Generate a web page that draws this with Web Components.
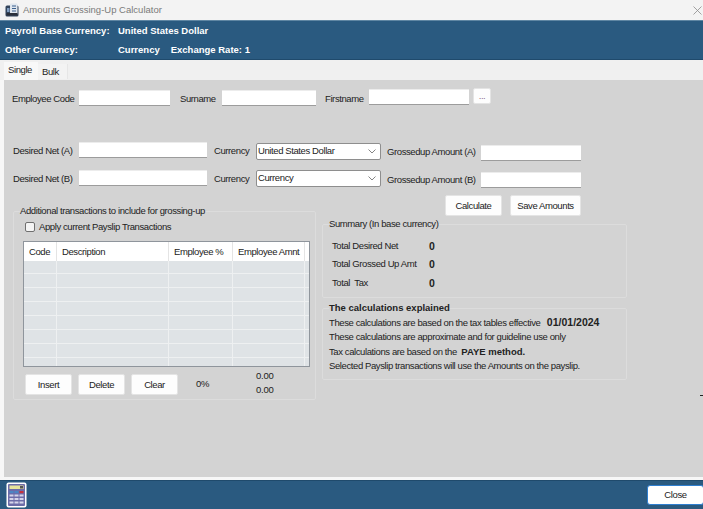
<!DOCTYPE html>
<html>
<head>
<meta charset="utf-8">
<title>Amounts Grossing-Up Calculator</title>
<style>
  html, body { margin: 0; padding: 0; background: #d3d3d3; }
  body { font: 9.5px/12px "Liberation Sans", Arial, sans-serif; letter-spacing: -0.4px; color: #222; }
</style>
</head>
<body>
<amt-calculator></amt-calculator>

<script>
function define(name, html, setup) {
    const template = document.createElement('template');
    template.innerHTML = html;
    customElements.define(name, class extends HTMLElement {
        constructor() {
            super();
            this.attachShadow({ mode: 'open' });
            this.shadowRoot.appendChild(template.content.cloneNode(true));
            if (setup) setup(this.shadowRoot, this);
        }
    });
}

define('amt-titlebar', `
  <style>
    :host { display: flex; align-items: center; height: 20px; padding: 0 5px; box-sizing: border-box; background: #f3f3f3; color: #7a7a7a; font-size: 9.5px; letter-spacing: 0; }
    .icon { width: 14px; height: 14px; margin-right: 4px; flex: none; }
    .title { flex: 1; }
    .x { width: 9px; height: 9px; flex: none; margin-right: -4px; }
  </style>
  <svg class="icon" viewBox="0 0 14 14">
    <rect x="0.5" y="2.5" width="13" height="11" rx="1.5" fill="#33455c"/>
    <rect x="5" y="0.5" width="7.5" height="11" rx="1" fill="#dfe6ee"/>
    <path d="M7 3h4M7 5.5h4M7 8h4" stroke="#3a5f8c" stroke-width="1.2"/>
    <rect x="1.5" y="10" width="11" height="2.5" fill="#2a2f3a"/>
    <rect x="2" y="5" width="2.5" height="4" fill="#7f9cc0"/>
  </svg>
  <span class="title"><slot></slot></span>
  <svg class="x" viewBox="0 0 9 9"><path d="M.5.5l8 8M8.5.5l-8 8" stroke="#8c8c8c" stroke-width=".8" fill="none"/></svg>
`);

define('amt-band', `
  <style>
    :host { display: grid; grid-template-columns: 113px 1fr; grid-template-rows: 19px 19px; align-items: center; align-content: start; height: 40px; box-sizing: border-box; padding: 0 0 0 5px; background: #2a5a80; border-top: 1px solid #5f86a3; border-bottom: 1px solid #1f4a6c; color: #fff; font-weight: bold; letter-spacing: 0; }
  </style>
  <slot></slot>
`);

define('amt-tabs', `
  <style>
    :host { display: flex; align-items: flex-end; height: 20px; padding-left: 4px; box-sizing: border-box; background: #f0f0f0; }
    ::slotted(*) { display: block; }
    ::slotted([active]) { width: 34px; height: 18px; line-height: 16px; background: #f8f8f8; padding-left: 4px; box-sizing: border-box; }
    ::slotted(:not([active])) { width: 30px; height: 15px; margin-bottom: 1px; line-height: 15px; padding-left: 4px; box-sizing: border-box; background: #f3f3f3; border-right: 1px solid #e6e6e6; }
  </style>
  <slot></slot>
`);

define('amt-input', `
  <style>
    :host { display: block; height: 16px; box-sizing: border-box; background: #fff; border-top: 1px solid #ececec; border-bottom: 1px solid #9c9c9c; flex: none; }
  </style>
`);

define('amt-select', `
  <style>
    :host { display: flex; align-items: center; justify-content: space-between; height: 17px; box-sizing: border-box; padding: 0 4px 1px 1px; background: #fff; border: 1px solid #8e8e8e; border-radius: 2px; flex: none; }
    svg { width: 8px; height: 5px; }
  </style>
  <slot></slot>
  <svg viewBox="0 0 8 5"><path d="M.5.5L4 4 7.5.5" fill="none" stroke="#777" stroke-width=".9"/></svg>
`);

define('amt-button', `
  <style>
    :host { display: flex; align-items: center; justify-content: center; height: 21px; box-sizing: border-box; background: #fdfdfd; border: 1px solid #e4e4e4; border-radius: 2px; flex: none; white-space: nowrap; }
  </style>
  <slot></slot>
`);

define('amt-group', `
  <style>
    :host { display: block; box-sizing: border-box; }
    fieldset { margin: 0; padding: 0; height: 100%; box-sizing: border-box; border: 1px solid #dcdcdc; border-radius: 2px; min-width: 0; }
    legend { margin-left: 6px; padding: 0; line-height: 12px; }
    .body { padding-left: var(--pad, 9px); }
  </style>
  <fieldset><legend><slot name="legend"></slot></legend><div class="body"><slot></slot></div></fieldset>
`);

define('amt-checkbox', `
  <style>
    :host { display: flex; align-items: center; gap: 4px; height: 12px; }
    i { display: block; width: 10px; height: 10px; box-sizing: border-box; background: #f4f4f4; border: 1px solid #6f6f6f; border-radius: 2px; }
  </style>
  <i></i><span><slot></slot></span>
`);

define('amt-grid', `
  <style>
    :host { display: block; width: 287px; height: 126px; box-sizing: border-box; border: 1px solid #8f959c; overflow: hidden; background: #dfe3e6; }
    .row { display: grid; grid-template-columns: 33px 112px 64px 72px 1fr; height: 14px; box-sizing: border-box; border-bottom: 1px solid #eef0f1; }
    .row span { border-right: 1px solid #eef0f1; box-sizing: border-box; }
    .row span:last-child { border-right: 0; }
    .head { height: 19px; background: #fff; border-bottom: 0; align-items: center; }
    .head span { height: 100%; line-height: 19px; padding-left: 5px; border-right-color: #e4e4e4; white-space: nowrap; }
    .first { height: 13px; }
  </style>
  <div class="row head"><span>Code</span><span>Description</span><span>Employee %</span><span>Employee Amnt</span><span></span></div>
`, root => {
    for (let i = 0; i < 8; i++) {
        const row = document.createElement('div');
        row.className = i === 0 ? 'row first' : 'row';
        row.innerHTML = '<span></span><span></span><span></span><span></span><span></span>';
        root.appendChild(row);
    }
});

define('amt-calc-icon', `
  <style>
    :host { display: block; width: 21px; height: 26px; }
  </style>
  <svg width="21" height="26" viewBox="0 0 21 26">
    <rect x=".5" y=".5" width="20" height="25" rx="2" fill="#fff"/>
    <rect x="2" y="2" width="17" height="22" rx="1" fill="#6c6ca8"/>
    <rect x="3.5" y="3.5" width="14" height="3.5" fill="#e6e49a"/>
    <rect x="14" y="4" width="3" height="2.5" fill="#555"/>
    <rect x="3.5" y="9" width="4" height="2.2" fill="#4a86c5"/>
    <rect x="8.5" y="9" width="4" height="2.2" fill="#4a86c5"/>
    <rect x="13.5" y="9" width="4" height="2.2" fill="#c8323a"/>
    <path d="M3.5 13.5h4M8.5 13.5h4M13.5 13.5h4M3.5 17h4M8.5 17h4M13.5 17h4M3.5 20.5h4M8.5 20.5h4M13.5 20.5h4" stroke="#d5d5ea" stroke-width="2.2"/>
  </svg>
`);

define('amt-calculator', `
  <style>
    :host { display: flex; flex-direction: column; width: 703px; height: 509px; overflow: hidden; position: relative; background: #d3d3d3; }
    main { height: 397px; box-sizing: border-box; margin-left: 4px; padding: 10px 0 0 8px; background: #d3d3d3; }
    .edge { background: #f7f7f7; flex: 1; display: flex; flex-direction: column; }
    .row { display: flex; align-items: flex-start; }
    .label { flex: none; line-height: 16px; padding-top: 1px; white-space: nowrap; }
    .lower { display: flex; align-items: flex-start; }
    .left { width: 303px; height: 195px; margin: 10px 0 0 1px; }
    .right { width: 305px; margin-left: 6px; }
    .actions { display: flex; justify-content: flex-end; gap: 8px; width: 259px; }
    .controls { display: flex; align-items: flex-start; margin-top: 7px; padding-left: 2px; }
    .controls amt-button { width: 47px; margin-right: 6px; }
    .pct { margin: 4px 0 0 12px; }
    .totals { margin: -5px 0 0 47px; line-height: 14px; text-align: center; letter-spacing: -0.2px; }
    .totals div { height: 14px; }
    .sum { display: grid; grid-template-columns: 97px 1fr; grid-auto-rows: 18.5px; align-items: center; margin-top: 6.5px; white-space: nowrap; }
    b { font-weight: bold; letter-spacing: 0; }
    .sum b { font-size: 10.5px; }
    .explain p { margin: 0; line-height: 14px; white-space: nowrap; }
    .date { font-size: 10.5px; margin-left: 2px; }
    footer { display: flex; align-items: center; justify-content: space-between; height: 29px; box-sizing: border-box; padding: 0 0 0 6px; background: #2a5a80; border-top: 1px solid #1f4a6c; }
    .close { width: 57px; height: 20px; margin-right: -1px; background: #fff; border: 1px solid #2f7fd0; border-radius: 3px; }
    .mark { position: absolute; left: 700px; top: 395px; width: 3px; height: 1px; background: #222; }
  </style>
  <amt-titlebar>Amounts Grossing-Up Calculator</amt-titlebar>
  <amt-band>
    <span>Payroll Base Currency:</span><span>United States Dollar</span>
    <span>Other Currency:</span><span>Currency<span style="margin-left:11px">Exchange Rate: 1</span></span>
  </amt-band>
  <amt-tabs><span active>Single</span><span>Bulk</span></amt-tabs>
  <div class="edge">
    <main>
      <div class="row" style="height:52px">
        <span class="label" style="width:67px">Employee Code</span>
        <amt-input style="width:91px"></amt-input>
        <span class="label" style="width:42px;margin-left:10px">Surname</span>
        <amt-input style="width:94px"></amt-input>
        <span class="label" style="width:44px;margin-left:9px">Firstname</span>
        <amt-input style="width:100px;margin-top:-1px"></amt-input>
        <amt-button style="width:18px;height:16px;margin:-2px 0 0 4px;color:#8a6a8a">...</amt-button>
      </div>
      <div class="row" style="height:28px">
        <span class="label" style="width:67px;padding-left:1px;box-sizing:border-box">Desired Net (A)</span>
        <amt-input style="width:128px"></amt-input>
        <span class="label" style="width:42px;margin-left:7px">Currency</span>
        <amt-select style="width:125px;margin-top:1px">United States Dollar</amt-select>
        <span class="label" style="width:94px;margin:1px 0 0 6px">Grossedup Amount (A)</span>
        <amt-input style="width:100px;margin-top:3px"></amt-input>
      </div>
      <div class="row" style="height:25px">
        <span class="label" style="width:67px;padding-left:1px;box-sizing:border-box">Desired Net (B)</span>
        <amt-input style="width:128px"></amt-input>
        <span class="label" style="width:42px;margin-left:7px">Currency</span>
        <amt-select style="width:125px">Currency</amt-select>
        <span class="label" style="width:94px;margin:1px 0 0 6px">Grossedup Amount (B)</span>
        <amt-input style="width:100px;margin-top:2px"></amt-input>
      </div>
      <div class="lower">
        <amt-group class="left">
          <span slot="legend">Additional transactions to include for grossing-up</span>
          <amt-checkbox style="margin:4px 0 0 2px">Apply current Payslip Transactions</amt-checkbox>
          <amt-grid style="margin-top:8px"></amt-grid>
          <div class="controls">
            <amt-button>Insert</amt-button>
            <amt-button>Delete</amt-button>
            <amt-button>Clear</amt-button>
            <span class="pct">0%</span>
            <div class="totals"><div>0.00</div><div>0.00</div></div>
          </div>
        </amt-group>
        <div class="right">
          <div class="actions">
            <amt-button style="width:57px">Calculate</amt-button>
            <amt-button style="width:71px">Save Amounts</amt-button>
          </div>
          <amt-group style="height:80px;margin-top:2px;--pad:9px">
            <span slot="legend">Summary (In base currency)</span>
            <div class="sum">
              <span>Total Desired Net</span><b>0</b>
              <span>Total Grossed Up Amt</span><b>0</b>
              <span>Total&nbsp; Tax</span><b>0</b>
            </div>
          </amt-group>
          <amt-group class="explain" style="height:78px;margin-top:4px;--pad:6px">
            <b slot="legend">The calculations explained</b>
            <p style="margin-top:1px">These calculations are based on the tax tables effective &nbsp;<b class="date">01/01/2024</b></p>
            <p>These calculations are approximate and for guideline use only</p>
            <p style="margin-top:1px">Tax calculations are based on the &nbsp;<b>PAYE method.</b></p>
            <p>Selected Payslip transactions will use the Amounts on the payslip.</p>
          </amt-group>
        </div>
      </div>
    </main>
    <div style="height:3px;margin-left:-4px;background:#f7f7f7"></div>
  </div>
  <footer>
    <amt-calc-icon></amt-calc-icon>
    <amt-button class="close">Close</amt-button>
  </footer>
  <i class="mark"></i>
`);
</script>
</body>
</html>
